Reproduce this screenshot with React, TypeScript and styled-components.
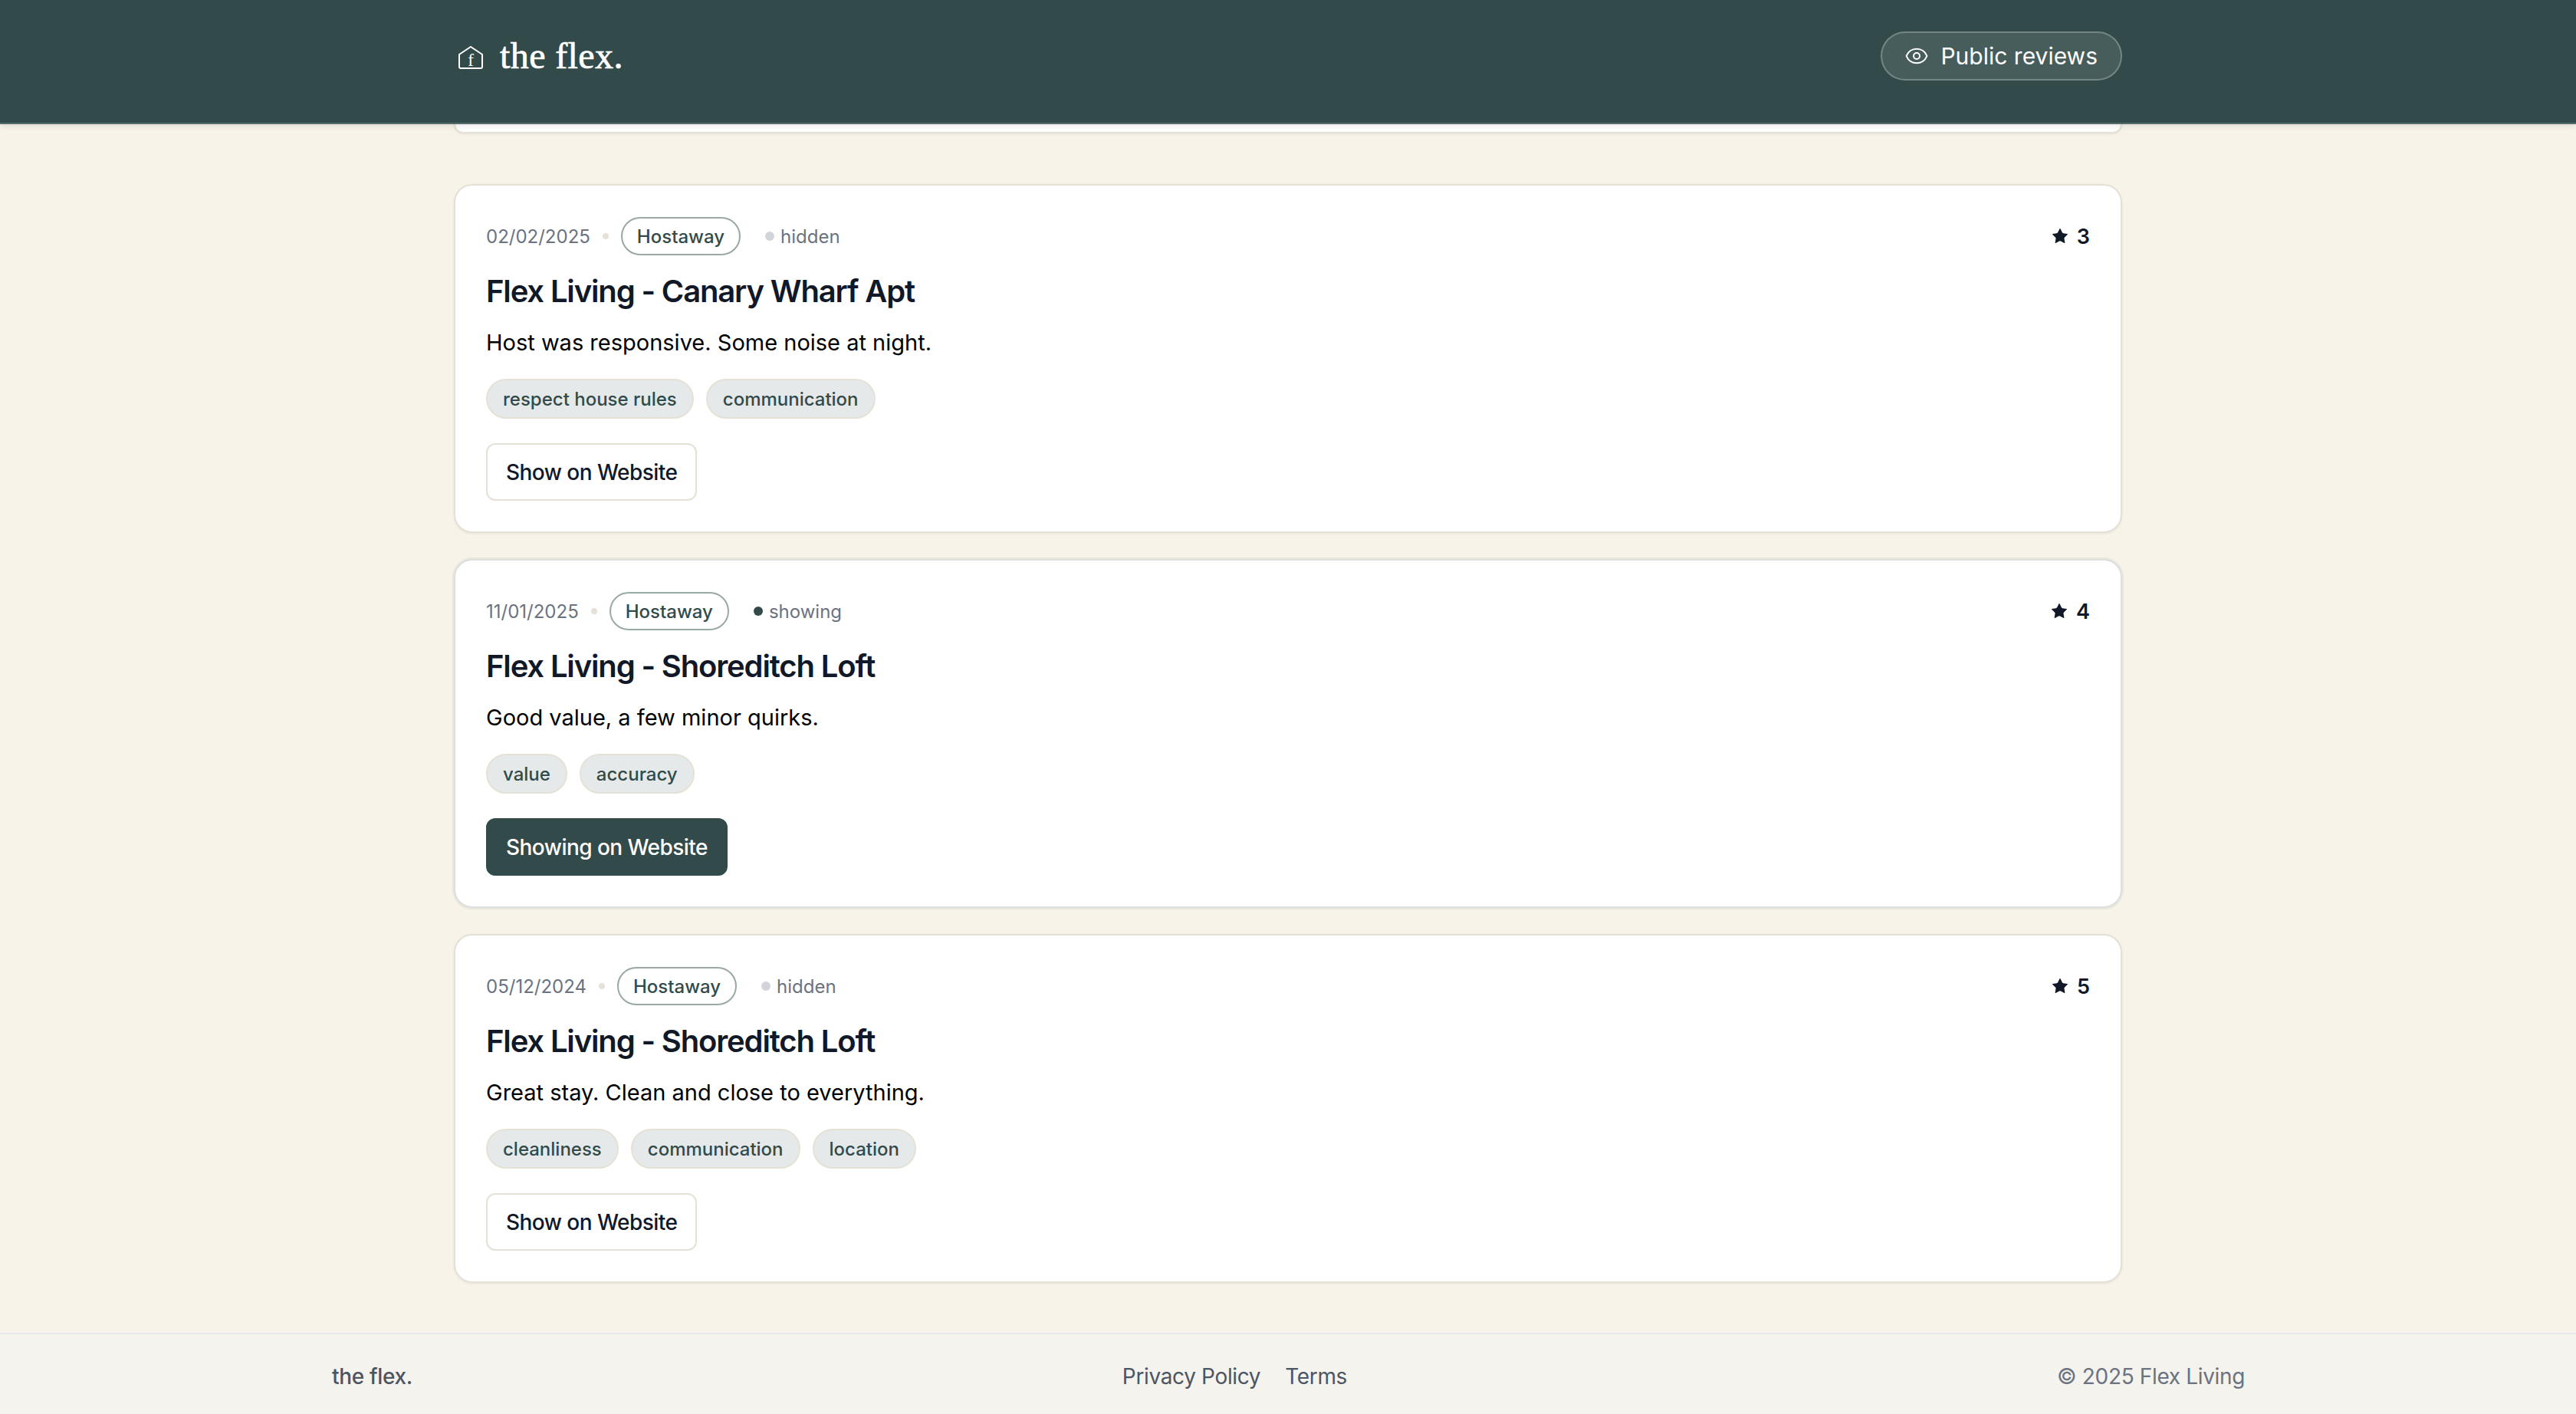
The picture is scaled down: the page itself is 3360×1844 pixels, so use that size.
import React from "react";
import styled, { createGlobalStyle } from "styled-components";
import { Eye, Star } from "lucide-react";

interface Review {
  date: string;
  title: string;
  body: string;
  tags: string[];
  rating: number;
  showing?: boolean;
}

const reviews: Review[] = [
  {
    date: "02/02/2025",
    title: "Flex Living - Canary Wharf Apt",
    body: "Host was responsive. Some noise at night.",
    tags: ["respect house rules", "communication"],
    rating: 3,
  },
  {
    date: "11/01/2025",
    title: "Flex Living - Shoreditch Loft",
    body: "Good value, a few minor quirks.",
    tags: ["value", "accuracy"],
    rating: 4,
    showing: true,
  },
  {
    date: "05/12/2024",
    title: "Flex Living - Shoreditch Loft",
    body: "Great stay. Clean and close to everything.",
    tags: ["cleanliness", "communication", "location"],
    rating: 5,
  },
];

const GlobalStyle = createGlobalStyle`
  html, body {
    margin: 0;
    padding: 0;
    background: #f7f3e9;
    font-family: Inter, "Liberation Sans", sans-serif;
  }
  * {
    box-sizing: border-box;
  }
`;

const Page = styled.div`
  display: flex;
  flex-direction: column;
  height: 1844px;
  overflow: hidden;
  background: #f7f3e9;
`;

const Header = styled.header`
  height: 162px;
  flex: none;
  padding-bottom: 14px;
  background: #324b4a;
  border-bottom: 2px solid #566c6b;
  box-shadow: 0 2px 8px rgba(0, 0, 0, 0.1);
  display: flex;
  justify-content: center;
  position: relative;
  z-index: 2;
`;

const HeaderInner = styled.div`
  width: 2176px;
  display: flex;
  align-items: center;
  justify-content: space-between;
`;

const Brand = styled.div`
  display: flex;
  align-items: center;
  gap: 21px;
  padding-left: 5px;
  color: #fff;
`;

const LogoSvg = styled.svg`
  margin-top: 3px;
`;

const BrandName = styled.span`
  font-family: "Liberation Serif", serif;
  font-size: 48px;
  line-height: 60px;
  letter-spacing: 0.4px;
  -webkit-text-stroke: 0.7px #fff;
`;

const PublicPill = styled.a`
  display: flex;
  align-items: center;
  gap: 15px;
  height: 64px;
  padding: 0 30px 0 29px;
  border: 2px solid rgba(255, 255, 255, 0.25);
  border-radius: 32px;
  background: rgba(255, 255, 255, 0.1);
  color: #fff;
  font-size: 30px;
  font-weight: 400;
`;

const Main = styled.main`
  flex: 1;
  display: flex;
  flex-direction: column;
  align-items: center;
`;

const Sliver = styled.div`
  width: 2176px;
  height: 12px;
  flex: none;
  background: #fff;
  border: 2px solid #e6e1d6;
  border-top: none;
  border-radius: 0 0 24px 24px;
  box-shadow: 0 1px 3px rgba(120, 110, 80, 0.12);
`;

const List = styled.div`
  width: 2176px;
  margin-top: 66px;
  display: flex;
  flex-direction: column;
  gap: 34px;
`;

const Card = styled.article<{ $active?: boolean }>`
  height: 455px;
  padding: 40px;
  background: #fff;
  border: 2px solid ${({ $active }) => ($active ? "#dde1de" : "#e6e1d6")};
  border-radius: 24px;
  box-shadow: ${({ $active }) =>
    $active
      ? "0 0 0 2px #e8e6dd, 0 1px 3px rgba(120, 110, 80, 0.12)"
      : "0 1px 3px rgba(120, 110, 80, 0.12)"};
`;

const MetaRow = styled.div`
  display: flex;
  align-items: center;
  justify-content: space-between;
  height: 52px;
`;

const Meta = styled.div`
  display: flex;
  align-items: center;
  gap: 16px;
`;

const DateText = styled.span`
  font-size: 24px;
  color: #6b7280;
`;

const Separator = styled.span`
  width: 8px;
  height: 8px;
  border-radius: 50%;
  background: #e6e1d6;
`;

const Source = styled.span`
  height: 50px;
  padding: 0 19px;
  display: flex;
  align-items: center;
  border: 2px solid #9aa8a8;
  border-radius: 25px;
  font-size: 24px;
  font-weight: 500;
  color: #324b4a;
`;

const Status = styled.span`
  display: flex;
  align-items: center;
  gap: 8px;
  margin-left: 16px;
  font-size: 24px;
  color: #6b7280;
`;

const StatusDot = styled.span<{ $on?: boolean }>`
  width: 12px;
  height: 12px;
  border-radius: 50%;
  background: ${({ $on }) => ($on ? "#324b4a" : "#d1d5db")};
`;

const Rating = styled.div`
  display: flex;
  align-items: center;
  gap: 10px;
  font-size: 27px;
  font-weight: 600;
  color: #111827;
`;

const Title = styled.h3`
  margin: 18px 0 0;
  font-size: 40px;
  line-height: 56px;
  font-weight: 600;
  letter-spacing: -1.15px;
  color: #111827;
`;

const Body = styled.p`
  margin: 17px 0 0;
  font-size: 29px;
  line-height: 44px;
  color: #000;
`;

const Tags = styled.div`
  display: flex;
  gap: 16px;
  margin-top: 25px;
`;

const Tag = styled.span`
  height: 52px;
  padding: 0 20px;
  display: flex;
  align-items: center;
  background: #e5e9e9;
  border: 2px solid #e6e1d6;
  border-radius: 26px;
  font-size: 24px;
  font-weight: 500;
  color: #324b4a;
`;

const ToggleButton = styled.button<{ $on?: boolean }>`
  display: block;
  margin-top: 32px;
  height: 75px;
  padding: 0 24px;
  border: 2px solid ${({ $on }) => ($on ? "#324b4a" : "#e6e1d6")};
  border-radius: 12px;
  background: ${({ $on }) => ($on ? "#324b4a" : "#fff")};
  color: ${({ $on }) => ($on ? "#fff" : "#111827")};
  font-family: inherit;
  font-size: 28px;
  font-weight: 450;
  letter-spacing: -0.55px;
`;

const Footer = styled.footer`
  height: 106px;
  flex: none;
  padding-top: 6px;
  background: #f5f3ee;
  border-top: 2px solid #e5e7eb;
  display: flex;
  justify-content: center;
`;

const FooterInner = styled.div`
  width: 2496px;
  padding-left: 1px;
  display: flex;
  align-items: center;
  justify-content: space-between;
  font-size: 28px;
  letter-spacing: -0.35px;
`;

const FooterBrand = styled.span`
  font-weight: 500;
  color: #4b5563;
`;

const FooterNav = styled.nav`
  display: flex;
  gap: 32px;
  color: #4b5563;
`;

const Copyright = styled.span`
  color: #6b7280;
`;

const LogoMark = () => (
  <LogoSvg width="34" height="32" viewBox="0 0 34 32" fill="none" stroke="#fff" strokeWidth="2">
    <path d="M2 12 L17 2 L32 12 V28 Q32 30 30 30 H4 Q2 30 2 28 Z" strokeLinejoin="round" />
    <text
      x="17"
      y="27"
      textAnchor="middle"
      fontFamily="Liberation Serif, serif"
      fontSize="23"
      fill="#fff"
      stroke="none"
    >
      f
    </text>
  </LogoSvg>
);

const ReviewCard = ({ review }: { review: Review }) => (
  <Card $active={review.showing}>
    <MetaRow>
      <Meta>
        <DateText>{review.date}</DateText>
        <Separator />
        <Source>Hostaway</Source>
        <Status>
          <StatusDot $on={review.showing} />
          {review.showing ? "showing" : "hidden"}
        </Status>
      </Meta>
      <Rating>
        <Star size={24} fill="#111827" strokeWidth={0} />
        {review.rating}
      </Rating>
    </MetaRow>
    <Title>{review.title}</Title>
    <Body>{review.body}</Body>
    <Tags>
      {review.tags.map((tag) => (
        <Tag key={tag}>{tag}</Tag>
      ))}
    </Tags>
    <ToggleButton $on={review.showing}>
      {review.showing ? "Showing on Website" : "Show on Website"}
    </ToggleButton>
  </Card>
);

export default function App() {
  return (
    <Page>
      <GlobalStyle />
      <Header>
        <HeaderInner>
          <Brand>
            <LogoMark />
            <BrandName>the flex.</BrandName>
          </Brand>
          <PublicPill>
            <Eye size={32} strokeWidth={1.5} />
            Public reviews
          </PublicPill>
        </HeaderInner>
      </Header>
      <Main>
        <Sliver />
        <List>
          {reviews.map((review) => (
            <ReviewCard key={review.date} review={review} />
          ))}
        </List>
      </Main>
      <Footer>
        <FooterInner>
          <FooterBrand>the flex.</FooterBrand>
          <FooterNav>
            <span>Privacy Policy</span>
            <span>Terms</span>
          </FooterNav>
          <Copyright>© 2025 Flex Living</Copyright>
        </FooterInner>
      </Footer>
    </Page>
  );
}
